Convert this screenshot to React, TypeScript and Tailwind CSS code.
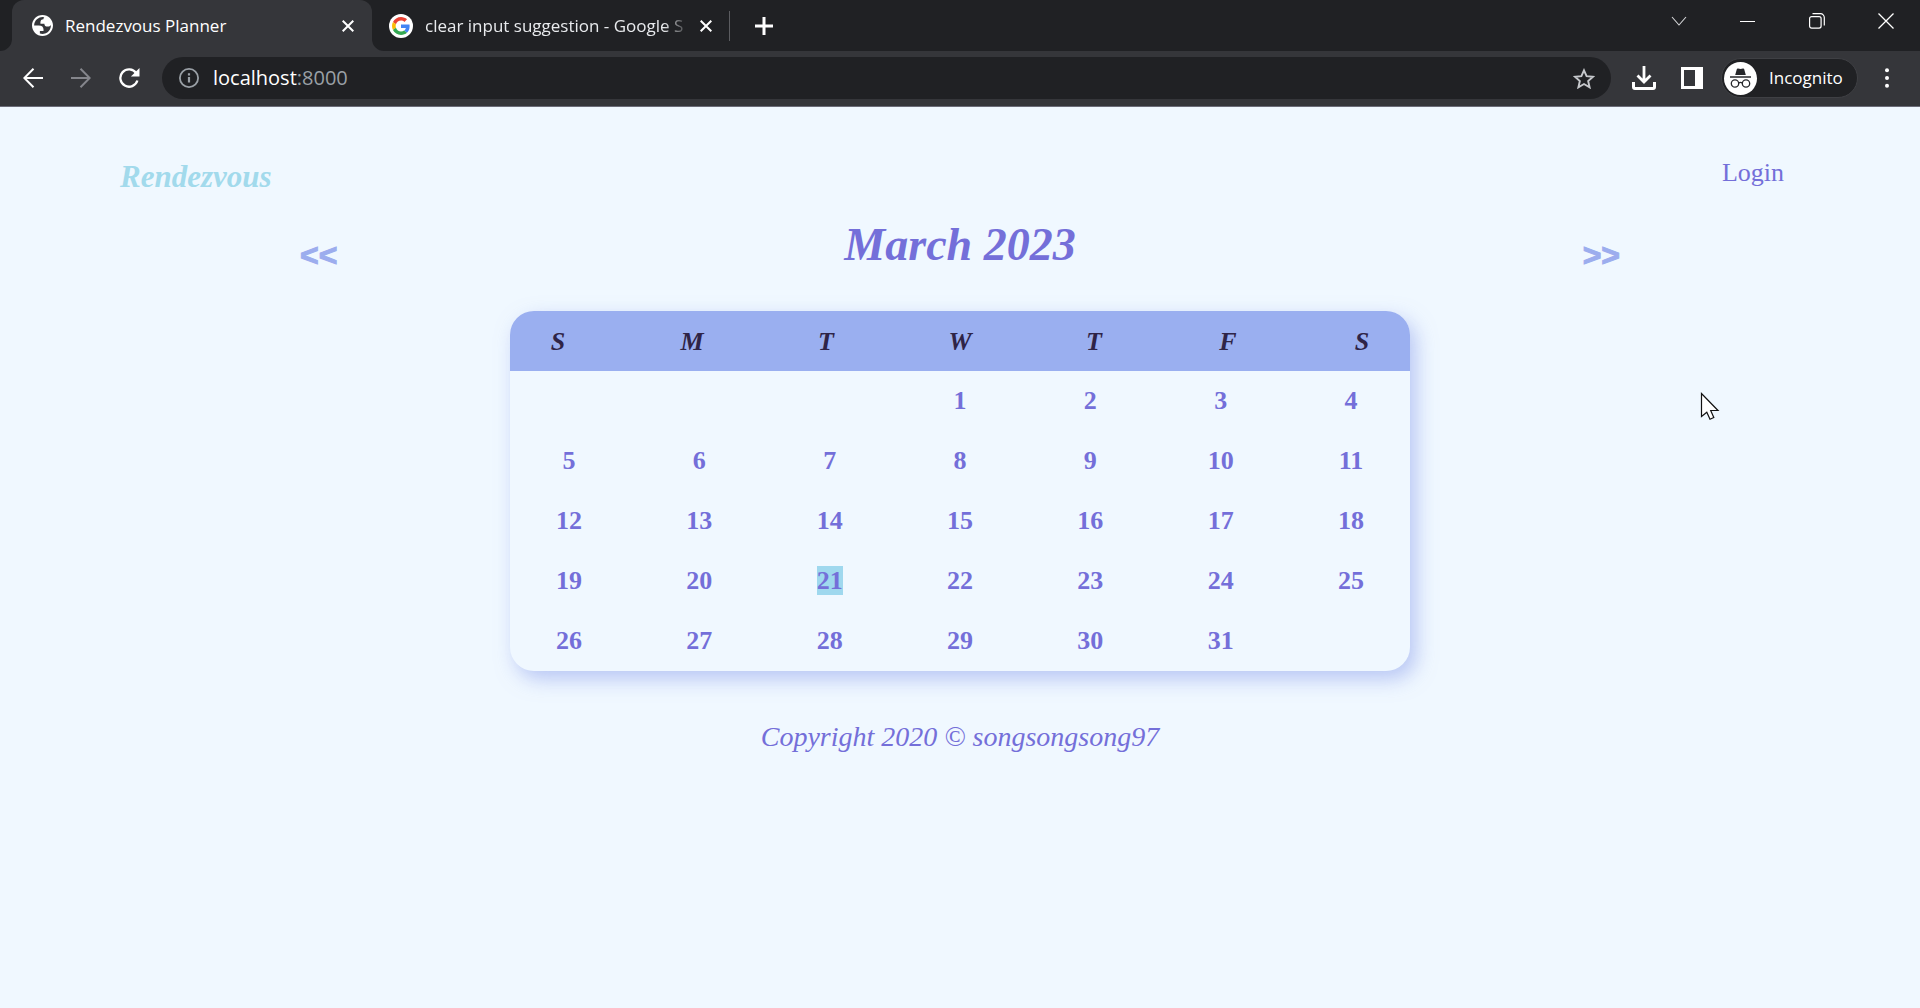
import type { ReactNode } from 'react';

const weekdays = ['S', 'M', 'T', 'W', 'T', 'F', 'S'];

const weeks: (number | null)[][] = [
  [null, null, null, 1, 2, 3, 4],
  [5, 6, 7, 8, 9, 10, 11],
  [12, 13, 14, 15, 16, 17, 18],
  [19, 20, 21, 22, 23, 24, 25],
  [26, 27, 28, 29, 30, 31, null],
];

const today = 21;

function CloseGlyph() {
  return (
    <svg width="12" height="12" viewBox="0 0 12 12" stroke="currentColor" strokeWidth="2" fill="none">
      <path d="M0.7 0.7 11.3 11.3M11.3 0.7 0.7 11.3" />
    </svg>
  );
}

function GlobeIcon() {
  return (
    <svg className="size-[21px] shrink-0" viewBox="2 2 20 20" fill="#fff">
      <path
        fillRule="evenodd"
        d="M12 2C6.480 2 2 6.480 2 12s4.480 10 10 10 10-4.480 10-10S17.520 2 12 2zM4 12h4.400c3.407.022 4.922 1.730 4.543 5.127H9.488v2.470a8.004 8.004 0 0 0 10.498-8.083C19.327 12.504 18.332 13 17 13c-2.137 0-3.206-.916-3.206-2.750h-3.748c-.274-2.728.683-4.092 2.870-4.092 0-.975.327-1.597.811-1.970A8 8 0 0 0 4 12z"
      />
    </svg>
  );
}

function GoogleIcon() {
  return (
    <span className="flex size-6 shrink-0 items-center justify-center rounded-full bg-white">
      <svg width="18" height="18" viewBox="0 0 48 48">
        <path fill="#EA4335" d="M24 9.500c3.540 0 6.710 1.220 9.210 3.600l6.850-6.850C35.900 2.380 30.470 0 24 0 14.620 0 6.510 5.380 2.560 13.220l7.980 6.190C12.430 13.720 17.740 9.500 24 9.500z" />
        <path fill="#4285F4" d="M46.980 24.550c0-1.570-.15-3.090-.38-4.550H24v9.020h12.940c-.58 2.960-2.260 5.480-4.780 7.180l7.730 6c4.510-4.180 7.090-10.360 7.090-17.650z" />
        <path fill="#FBBC05" d="M10.530 28.590c-.48-1.450-.76-2.990-.76-4.590s.27-3.140.76-4.590l-7.980-6.190C.92 16.460 0 20.120 0 24c0 3.880.92 7.540 2.560 10.780l7.970-6.190z" />
        <path fill="#34A853" d="M24 48c6.480 0 11.930-2.130 15.890-5.810l-7.730-6c-2.150 1.450-4.920 2.300-8.160 2.300-6.260 0-11.570-4.220-13.470-9.910l-7.980 6.190C6.510 42.620 14.620 48 24 48z" />
      </svg>
    </span>
  );
}

function WindowButton({ label, children }: { label: string; children: ReactNode }) {
  return (
    <button type="button" aria-label={label} className="flex h-[42px] w-[69px] items-center justify-center text-white">
      {children}
    </button>
  );
}

function ToolButton({ label, children }: { label: string; children: ReactNode }) {
  return (
    <button type="button" aria-label={label} className="flex h-10 w-12 shrink-0 items-center justify-center text-white">
      {children}
    </button>
  );
}

function TabStrip() {
  return (
    <div className="flex h-[51px] bg-[#202124] pl-3 text-[17px]">
      <div className="relative flex w-[360px] items-center rounded-t-xl bg-[#35363a] pr-3 pl-5 text-white">
        <svg className="absolute bottom-0 -left-3 size-3" viewBox="0 0 12 12" fill="#35363a">
          <path d="M12 0v12H0A12 12 0 0 0 12 0z" />
        </svg>
        <svg className="absolute -right-3 bottom-0 size-3" viewBox="0 0 12 12" fill="#35363a">
          <path d="M0 0v12h12A12 12 0 0 1 0 0z" />
        </svg>
        <GlobeIcon />
        <span className="ml-3 min-w-0 flex-1 truncate">Rendezvous Planner</span>
        <button type="button" aria-label="Close tab" className="flex size-6 items-center justify-center">
          <CloseGlyph />
        </button>
      </div>
      <div className="flex w-[357px] items-center pr-[11px] pl-[17px] text-[#e8eaed]">
        <GoogleIcon />
        <span className="ml-3 min-w-0 flex-1 whitespace-nowrap [mask-image:linear-gradient(to_right,black_90%,transparent)]">
          clear input suggestion - Google S
        </span>
        <button type="button" aria-label="Close tab" className="ml-1 flex size-6 items-center justify-center text-white">
          <CloseGlyph />
        </button>
      </div>
      <div className="my-auto h-[30px] w-px bg-[#5b5c60]" />
      <button type="button" aria-label="New tab" className="ml-4 flex w-9 items-center justify-center text-white">
        <svg width="18" height="18" viewBox="0 0 18 18" stroke="currentColor" strokeWidth="3">
          <path d="M9 0v18M0 9h18" />
        </svg>
      </button>
      <div className="ml-auto flex">
        <WindowButton label="Search tabs">
          <svg width="16" height="10" viewBox="0 0 16 10" fill="none" stroke="#d5d6d8" strokeWidth="1.100">
            <path d="M1 1l7 8 7-8" />
          </svg>
        </WindowButton>
        <WindowButton label="Minimize">
          <svg width="15" height="15" viewBox="0 0 15 15" stroke="currentColor">
            <path d="M0 7.500h15" />
          </svg>
        </WindowButton>
        <WindowButton label="Restore">
          <svg width="16" height="16" viewBox="0 0 16 16" fill="none" stroke="currentColor" strokeWidth="1.200">
            <rect x="0.600" y="3.600" width="11.500" height="11.500" rx="2" />
            <path d="M3.500 0.700h8a3.800 3.800 0 0 1 3.800 3.800v8" />
          </svg>
        </WindowButton>
        <WindowButton label="Close">
          <svg width="16" height="16" viewBox="0 0 16 16" stroke="currentColor" strokeWidth="1.300">
            <path d="M0.500 0.500l15 15M15.500 0.500l-15 15" />
          </svg>
        </WindowButton>
      </div>
    </div>
  );
}

function Toolbar() {
  return (
    <div className="flex h-14 items-center border-b border-[#6b6c78] bg-[#35363a] px-[9px] pb-px">
      <ToolButton label="Back">
        <svg width="20" height="20" viewBox="0 0 20 20" fill="none" stroke="currentColor" strokeWidth="2">
          <path d="M20 10H1.500M10.500 0.800L1.300 10l9.200 9.200" />
        </svg>
      </ToolButton>
      <ToolButton label="Forward">
        <svg width="20" height="20" viewBox="0 0 20 20" fill="none" stroke="#85868c" strokeWidth="2">
          <path d="M0 10h18.500M9.500 0.800L18.700 10l-9.200 9.200" />
        </svg>
      </ToolButton>
      <ToolButton label="Reload">
        <svg width="21" height="20" viewBox="0 0 21 20" fill="none" stroke="currentColor" strokeWidth="2.300">
          <path d="M17.200 5A8.700 8.700 0 1 0 18.400 12.500" />
          <path d="M20.500 0v8.600h-8.600z" fill="currentColor" stroke="none" />
        </svg>
      </ToolButton>
      <div className="mx-[9px] flex h-[42px] min-w-0 flex-1 items-center rounded-full bg-[#202124] pr-4 pl-[17px]">
        <svg className="shrink-0" width="20" height="20" viewBox="0 0 20 20" fill="none" stroke="#9aa0a6" strokeWidth="1.800">
          <circle cx="10" cy="10" r="9.100" />
          <path d="M10 9v5.500M10 5.200v2.200" strokeWidth="2.200" />
        </svg>
        <div className="ml-3.5 min-w-0 flex-1 text-xl text-[#9aa0a6]">
          <span className="text-white">localhost</span>:8000
        </div>
        <button type="button" aria-label="Bookmark this tab">
          <svg width="22" height="21" viewBox="0 0 22 21" fill="none" stroke="#c6c8cc" strokeWidth="1.900">
            <path d="M11 2.300l2.600 5.900 6.400.6-4.850 4.250 1.450 6.300L11 16.050l-5.600 3.300 1.450-6.300L2 8.800l6.400-.6z" />
          </svg>
        </button>
      </div>
      <ToolButton label="Downloads">
        <svg width="24" height="24" viewBox="0 0 24 24" fill="none" stroke="currentColor" strokeWidth="3">
          <path d="M12 0v15M5.500 9.500l6.500 6.500 6.500-6.500" strokeWidth="2.800" />
          <path d="M1.500 16v5a1.500 1.500 0 0 0 1.500 1.500h18a1.500 1.500 0 0 0 1.500-1.500v-5" />
        </svg>
      </ToolButton>
      <ToolButton label="Side panel">
        <svg width="22" height="22" viewBox="0 0 22 22">
          <path fill="currentColor" fillRule="evenodd" d="M0 0h22v22H0zM3 3v16h11V3z" />
        </svg>
      </ToolButton>
      <button
        type="button"
        className="mx-[5px] flex h-10 w-[137px] shrink-0 items-center gap-3 rounded-full border border-[#3f4044] bg-[#202124] pl-0.5 text-[17px] text-white"
      >
        <span className="flex size-[33px] shrink-0 items-center justify-center rounded-full bg-white">
          <svg width="21" height="21" viewBox="0 0 21 21" fill="none" stroke="#26272b">
            <path d="M5.200 7L6.800 1.200Q7.100.3 8 .500L10.500 1.100 13 .500Q13.900.3 14.200 1.200L15.800 7z" fill="#26272b" stroke="none" />
            <path d="M0 9h21" strokeWidth="1.500" />
            <circle cx="5" cy="15.500" r="3.700" strokeWidth="1.300" />
            <circle cx="16" cy="15.500" r="3.700" strokeWidth="1.300" />
            <path d="M8.700 15q1.800-1.300 3.600 0" strokeWidth="1.300" />
          </svg>
        </span>
        Incognito
      </button>
      <ToolButton label="Menu">
        <svg width="4" height="20" viewBox="0 0 4 20" fill="currentColor">
          <circle cx="2" cy="2.200" r="2" />
          <circle cx="2" cy="10" r="2" />
          <circle cx="2" cy="17.800" r="2" />
        </svg>
      </ToolButton>
    </div>
  );
}

function MonthArrow({ label, children }: { label: string; children: ReactNode }) {
  return (
    <button
      type="button"
      aria-label={label}
      className="pt-5 font-['Liberation_Sans',sans-serif] text-[32px] leading-9 font-bold text-[#9cadee] [-webkit-text-stroke:1px_#9cadee]"
    >
      {children}
    </button>
  );
}

function Calendar() {
  return (
    <table className="mx-auto mt-8 block w-full max-w-[900px] overflow-hidden rounded-3xl bg-[#f0f8ff] text-[26px] shadow-[6px_8px_20px_#9fb0f0b3]">
      <thead className="block">
        <tr className="flex h-[60px] items-center justify-between bg-[#9aaff0] px-9 text-[#2f2447] italic">
          {weekdays.map((day, i) => (
            <th key={i} scope="col" className="flex w-6 justify-center font-bold">
              {day}
            </th>
          ))}
        </tr>
      </thead>
      <tbody className="block">
        {weeks.map((week, w) => (
          <tr key={w} className="flex h-[60px] items-center justify-between px-11 pb-0.5">
            {week.map((day, d) => (
              <td key={d} className="flex w-[30px] justify-center leading-[29px] font-bold">
                {day !== null && <span className={day === today ? 'bg-[#9fd8ee]' : ''}>{day}</span>}
              </td>
            ))}
          </tr>
        ))}
      </tbody>
    </table>
  );
}

export default function App() {
  return (
    <div className="relative flex min-h-screen flex-col bg-[#f0f8ff]">
      <header className="font-['Open_Sans','Noto_Sans',sans-serif]">
        <TabStrip />
        <Toolbar />
      </header>
      <main className="flex-1 font-['Liberation_Serif',serif] text-[#746fd9]">
        <nav className="flex items-start justify-between pt-12 pr-[136px] pl-[120px]">
          <a href="#home" className="text-[31px] leading-[44px] font-bold text-[#a2daec] italic">
            Rendezvous
          </a>
          <a href="#login" className="text-[26px] leading-9">
            Login
          </a>
        </nav>
        <div className="mt-3 flex items-center justify-between px-[300px]">
          <MonthArrow label="Previous month">&lt;&lt;</MonthArrow>
          <h1 className="text-[46px] leading-[68px] font-bold italic">March 2023</h1>
          <MonthArrow label="Next month">&gt;&gt;</MonthArrow>
        </div>
        <Calendar />
        <footer className="mt-12 text-center text-[28px] leading-9 italic">Copyright 2020 © songsongsong97</footer>
      </main>
      <svg className="absolute top-[392px] left-[1700px]" width="20" height="30" viewBox="0 0 20 30">
        <path
          d="M1.500 1.500v23l5.300-4.300 3.200 7 3.800-1.700-3.100-7h7.300z"
          fill="#fff"
          stroke="#111"
          strokeWidth="1.200"
        />
      </svg>
    </div>
  );
}
